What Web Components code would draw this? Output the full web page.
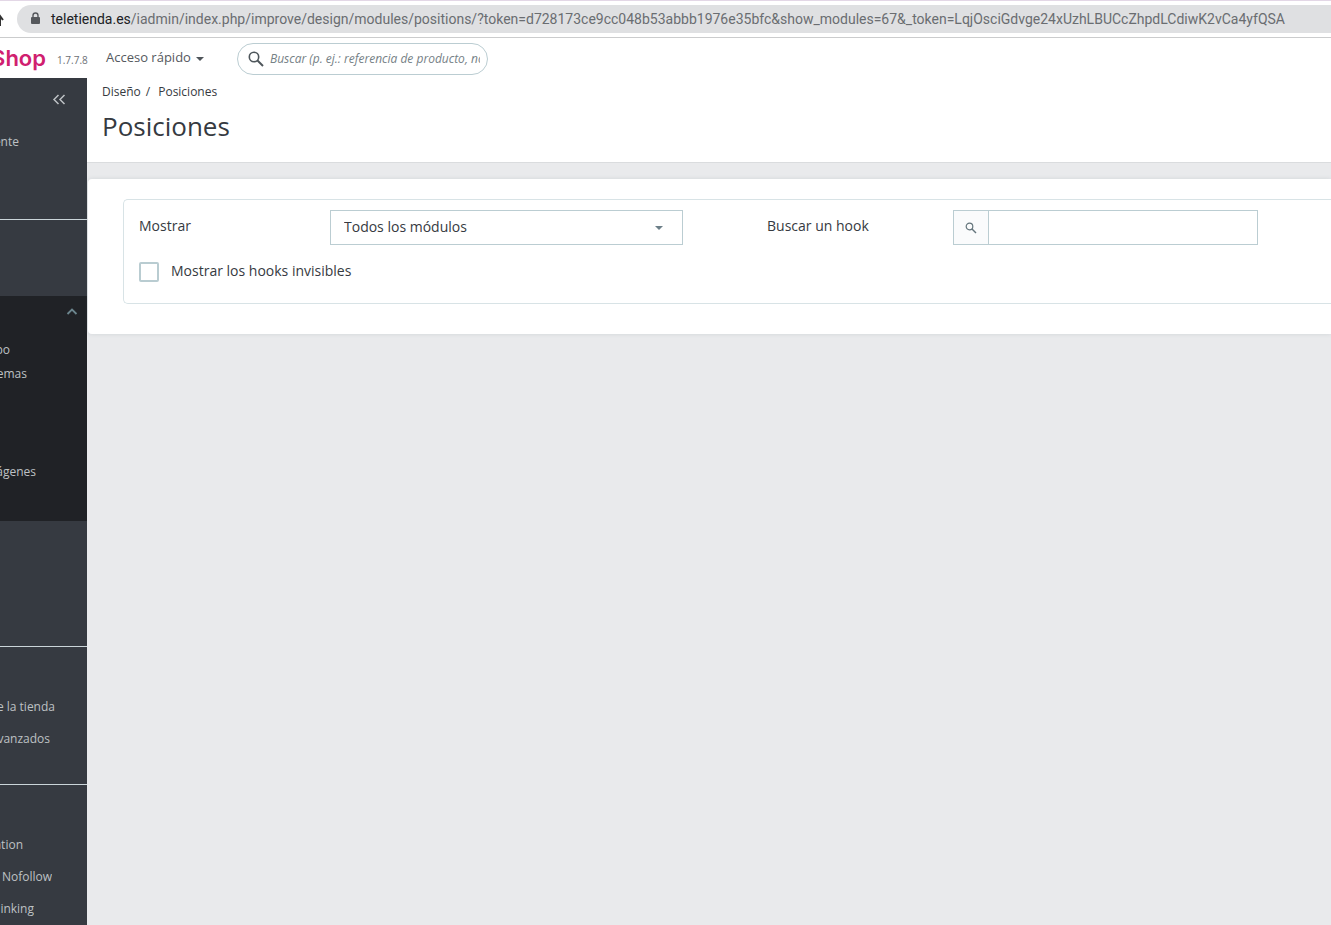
<!DOCTYPE html>
<html lang="es">
<head>
<meta charset="utf-8">
<meta name="viewport" content="width=device-width, initial-scale=1">
<title>Posiciones</title>
<style>
html, body { margin: 0; min-height: 100%; }
body { background: #e9eaec; font-family: "Open Sans", "Noto Sans", sans-serif; color: #363a41; overflow: hidden; }
</style>
</head>
<body>
<admin-window></admin-window>
<script>
function define(name, html) {
  const template = document.createElement('template');
  template.innerHTML = html;
  customElements.define(name, class extends HTMLElement {
    constructor() {
      super();
      this.attachShadow({ mode: 'open' }).append(template.content.cloneNode(true));
    }
  });
}

define('browser-bar', `
<style>
:host { display: flex; align-items: center; border-top: 1px solid #e3d7e6; border-bottom: 1px solid #cbcccd; background: #fff; box-sizing: border-box; height: 38px; overflow: hidden; }
.up { flex: none; width: 17px; height: 28px; }
.address { flex: 1; display: flex; align-items: center; gap: 10px; height: 28px; padding-left: 12px; border-radius: 14px 0 0 14px; background: #dfe0e2; color: #6a6d71; font: 14px/28px Roboto, sans-serif; white-space: nowrap; overflow: hidden; }
.address svg { flex: none; }
b { font-weight: 400; color: #202124; }
</style>
<svg class="up" viewBox="0 0 17 28"><path d="M0 11v10M-4 15l4-4 3 4" fill="none" stroke="#333" stroke-width="2"/></svg>
<div class="address">
<svg width="12" height="14" viewBox="0 0 12 14"><rect x="2" y="5" width="9" height="7" rx="1" fill="#55585c"/><path d="M4 6V3.500a2.500 2.500 0 0 1 5 0V6" fill="none" stroke="#55585c" stroke-width="1.400"/></svg>
<span><b>teletienda.es</b>/iadmin/index.php/improve/design/modules/positions/?token=d728173ce9cc048b53abbb1976e35bfc&amp;show_modules=67&amp;_token=LqjOsciGdvge24xUzhLBUCcZhpdLCdiwK2vCa4yfQSA</span>
</div>`);

define('top-bar', `
<style>
:host { display: flex; align-items: center; height: 40px; background: #fff; }
.logo { width: 46px; display: flex; justify-content: flex-end; overflow: hidden; color: #d0206f; font: 600 22px/32px Inter, sans-serif; text-decoration: none; }
.version { width: 31px; margin: 4px 18px 0 11px; font-size: 10px; line-height: 16px; color: #6c7075; }
.quick { display: flex; align-items: center; gap: 5px; width: 131px; padding: 0 0 3px; border: 0; background: none; color: #55595e; font: 13px/20px "Open Sans", sans-serif; white-space: nowrap; }
form { display: flex; align-items: center; gap: 6px; width: 251px; height: 32px; box-sizing: border-box; padding: 0 7px 0 10px; margin-top: 1px; border: 1px solid #bbcdd2; border-radius: 16px; }
form svg { flex: none; }
input { flex: 1; min-width: 0; padding: 0; border: 0; outline: 0; background: none; font: italic 12px/20px "Open Sans", sans-serif; color: #6c868e; }
input::placeholder { color: #768186; opacity: 1; }
</style>
<a class="logo" href="#">Shop</a>
<span class="version">1.7.7.8</span>
<button class="quick" type="button">Acceso rápido <svg width="8" height="8" viewBox="0 0 8 8"><path d="M0 4h8L4 8z" fill="#4f555a"/></svg></button>
<form><svg width="16" height="16" viewBox="0 0 16 16" fill="none" stroke="#4e565b"><circle cx="6" cy="6" r="4.700" stroke-width="1.600"/><path d="M9.500 9.500L15 15" stroke-width="2"/></svg>
<input type="text" aria-label="Buscar" placeholder="Buscar (p. ej.: referencia de producto, nombre)"></form>`);

define('menu-link', `
<style>
:host { display: flex; justify-content: flex-end; height: 32px; width: var(--end); overflow: hidden; }
a { flex: none; color: #bec1c4; font-size: 12px; line-height: 32px; text-decoration: none; white-space: nowrap; }
:host([sub]) { height: 24px; }
:host([sub]) a { line-height: 24px; }
</style><a href="#"><slot></slot></a>`);

define('side-menu', `
<style>
:host { display: block; background: #363a41; }
button { display: flex; justify-content: flex-end; align-items: center; width: 100%; height: 42px; padding: 0 21px 0 0; border: 0; background: none; }
section { box-sizing: border-box; border-bottom: 1px solid #cbd5d9; }
.sell { padding: 6px 0 61px; }
.improve { border-top: 76px solid #363a41; padding-bottom: 125px; }
.active { background: #202226; padding-bottom: 37px; }
.active button { height: 32px; padding-right: 9px; margin-bottom: 10px; }
.gap { height: 74px; }
.configure { padding: 44px 0 29px; }
.more { padding: 44px 0 0; border: 0; }
</style>
<button type="button" aria-label="Contraer menú"><svg width="14" height="12" viewBox="0 0 14 12" fill="none" stroke="#bec1c4" stroke-width="1.500"><path d="M6.500 2L2 6.500l4.500 4.500M12.500 2L8 6.500l4.500 4.500"/></svg></button>
<section class="sell"><menu-link style="--end:19px">ente</menu-link></section>
<section class="improve">
<div class="active">
<button type="button" aria-label="Plegar"><svg width="12" height="8" viewBox="0 0 12 8"><path d="M1.500 6L6 1.500l4.500 4.500" fill="none" stroke="#6c868e" stroke-width="1.800"/></svg></button>
<menu-link sub style="--end:10px">po</menu-link>
<menu-link sub style="--end:27px">emas</menu-link>
<div class="gap"></div>
<menu-link sub style="--end:36px">ágenes</menu-link>
</div>
</section>
<section class="configure"><menu-link style="--end:55px">e la tienda</menu-link><menu-link style="--end:50px">vanzados</menu-link></section>
<section class="more"><menu-link style="--end:23px">ation</menu-link><menu-link style="--end:52px">Nofollow</menu-link><menu-link style="--end:34px">inking</menu-link></section>`);

define('page-head', `
<style>
:host { display: block; padding: 4px 15px 19px; background: #fff; border-bottom: 1px solid #dadcde; }
nav { display: flex; gap: 5px; font-size: 12px; line-height: 20px; }
nav a { color: #363a41; text-decoration: none; }
nav a + span + a { margin-left: 3px; }
h1 { margin: 7px 0 0; font-size: 26px; line-height: 34px; font-weight: 400; }
</style>
<nav aria-label="Ruta"><a href="#">Diseño</a><span>/</span><a href="#">Posiciones</a></nav>
<h1>Posiciones</h1>`);

define('hook-filter', `
<style>
:host { display: block; margin: 16px 0 0 1px; padding: 20px 0 30px 35px; background: #fff; border-radius: 4px 0 0 4px; box-shadow: 0 0 4px rgba(100,120,130,.18); }
form { border: 1px solid #d8e3e6; border-right: 0; border-radius: 5px 0 0 5px; padding: 10px 73px 20px 15px; font-size: 14px; line-height: 20px; }
.row { display: grid; grid-template-columns: 191fr 353fr 84fr 186fr 305fr; }
.row > label { padding-top: 6px; }
.select { position: relative; display: block; }
select { appearance: none; width: 100%; height: 35px; padding: 0 13px 2px; border: 1px solid #bbcdd2; border-radius: 0; background: #fff; color: #363a41; font: 14px/20px "Open Sans", sans-serif; }
.select svg { position: absolute; right: 20px; top: 16px; pointer-events: none; }
.search { grid-column: 5; display: flex; height: 35px; box-sizing: border-box; border: 1px solid #bbcdd2; }
.search span { flex: none; display: grid; place-items: center; width: 34px; border-right: 1px solid #bbcdd2; background: #fafbfc; }
.search input { flex: 1; min-width: 0; border: 0; padding: 0 12px; outline: 0; font: 14px/20px "Open Sans", sans-serif; background: #fff; }
.check { display: flex; gap: 12px; margin-top: 16px; height: 22px; }
.check input { appearance: none; width: 20px; height: 20px; margin: 1px 0 0; border: 2px solid #b9ccd1; border-radius: 2px; background: #fff; }
</style>
<form>
<div class="row">
<label for="modules">Mostrar</label>
<div class="select"><select id="modules"><option>Todos los módulos</option></select><svg width="8" height="4" viewBox="0 0 8 4"><path d="M0 0h8L4 4z" fill="#6c7f88"/></svg></div>
<span></span>
<label for="hook">Buscar un hook</label>
<div class="search"><span><svg width="12" height="12" viewBox="0 0 12 12" fill="none" stroke="#64757c"><circle cx="4.500" cy="4.500" r="3.300" stroke-width="1.200"/><path d="M7 7l4 4" stroke-width="1.500"/></svg></span><input id="hook" type="text"></div>
</div>
<div class="check"><input id="hidden" type="checkbox"><label for="hidden">Mostrar los hooks invisibles</label></div>
</form>`);

define('admin-window', `
<style>
:host { display: flex; flex-direction: column; height: 100vh; overflow: hidden; }
browser-bar, top-bar { flex: none; }
.body { flex: 1; display: grid; grid-template-columns: 87px 1fr; min-height: 0; }
side-menu { overflow: hidden; }
</style>
<browser-bar></browser-bar>
<top-bar></top-bar>
<div class="body"><side-menu></side-menu><main><page-head></page-head><hook-filter></hook-filter></main></div>`);
</script>
</body>
</html>
